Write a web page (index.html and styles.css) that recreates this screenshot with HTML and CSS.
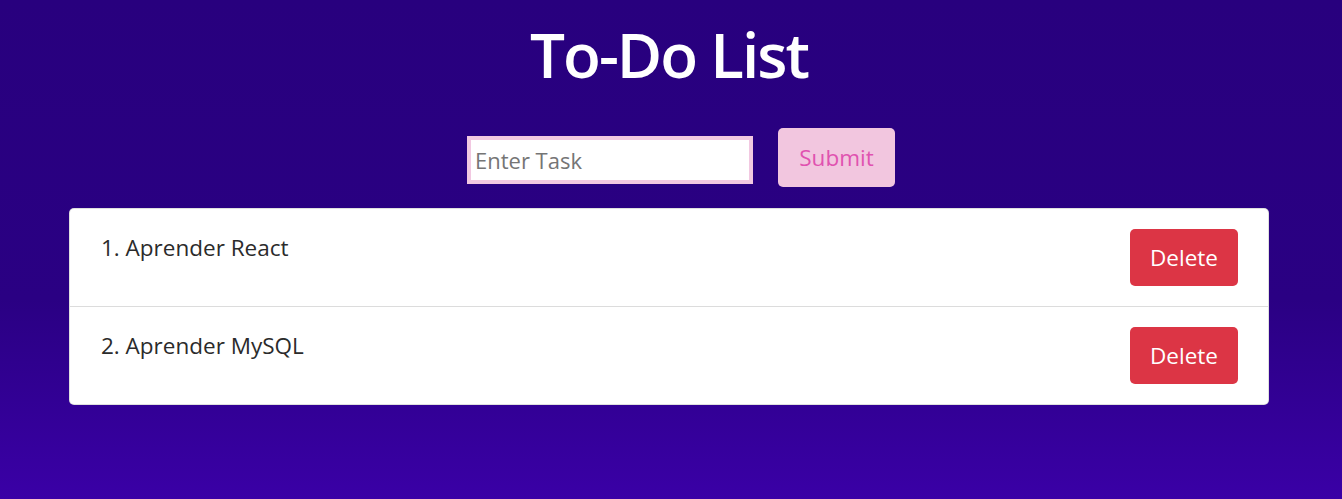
FILE: index.html
```html
<!DOCTYPE html>
<html lang="en">
<head>
<meta charset="utf-8">
<title>To-Do List</title>
<link rel="stylesheet" href="styles.css">
</head>
<body>
<div class="app">
  <h1 class="title">To-Do List</h1>
  <form class="task-form">
    <input class="task-input" type="text" placeholder="Enter Task">
    <button class="submit-btn" type="button">Submit</button>
  </form>
  <ul class="task-list">
    <li class="task-item">
      <span class="task-text">1. Aprender React</span>
      <button class="delete-btn" type="button">Delete</button>
    </li>
    <li class="task-item">
      <span class="task-text">2. Aprender MySQL</span>
      <button class="delete-btn" type="button">Delete</button>
    </li>
  </ul>
</div>
</body>
</html>
```

FILE: styles.css
```css
* { box-sizing: border-box; }
html, body { height: 100%; }
body {
  margin: 0;
  font-family: "Open Sans", "Noto Sans", sans-serif;
  background: linear-gradient(180deg, #28007e 0%, #2a0083 60%, #3a00a6 100%);
  color: #212529;
}
.app {
  width: 1200px;
  margin: 0 auto;
  padding-top: 16px;
  transform: translateX(-2px);
}
.title {
  margin: 0;
  text-align: center;
  color: #ffffff;
  font-size: 62px;
  font-weight: 600;
  line-height: 76px;
  letter-spacing: -2px;
}
.task-form {
  display: flex;
  justify-content: center;
  align-items: center;
  gap: 25px;
  margin-top: 36px;
  transform: translateX(12px);
}
.task-input {
  width: 286px;
  height: 48px;
  margin-top: 5px;
  border: 4px solid #f2c8e1;
  padding: 0 4px;
  font-family: inherit;
  font-size: 22px;
  color: #333;
  outline: none;
  border-radius: 0;
}
.task-input::placeholder { color: #757575; }
.submit-btn {
  width: 117px;
  height: 59px;
  border: none;
  border-radius: 5px;
  background: #f2c6df;
  color: #e052b0;
  font-family: inherit;
  font-size: 22.5px;
}
.task-list {
  list-style: none;
  margin: 21px 0 0;
  padding: 0;
  background: #ffffff;
  border-radius: 5px;
  border: 1px solid rgba(0,0,0,0.125);
}
.task-item {
  display: flex;
  justify-content: space-between;
  align-items: center;
  height: 97px;
  padding: 0 30px 0 31px;
}
.task-item + .task-item { border-top: 1px solid #dcdcdc; height: 98px; }
.task-text {
  align-self: flex-start;
  padding-top: 23px;
  font-size: 22.5px;
  color: #2b2b2b;
}
.delete-btn {
  width: 108px;
  height: 57px;
  border: none;
  border-radius: 5px;
  background: #dc3545;
  color: #ffffff;
  font-family: inherit;
  font-size: 22.5px;
}
```
